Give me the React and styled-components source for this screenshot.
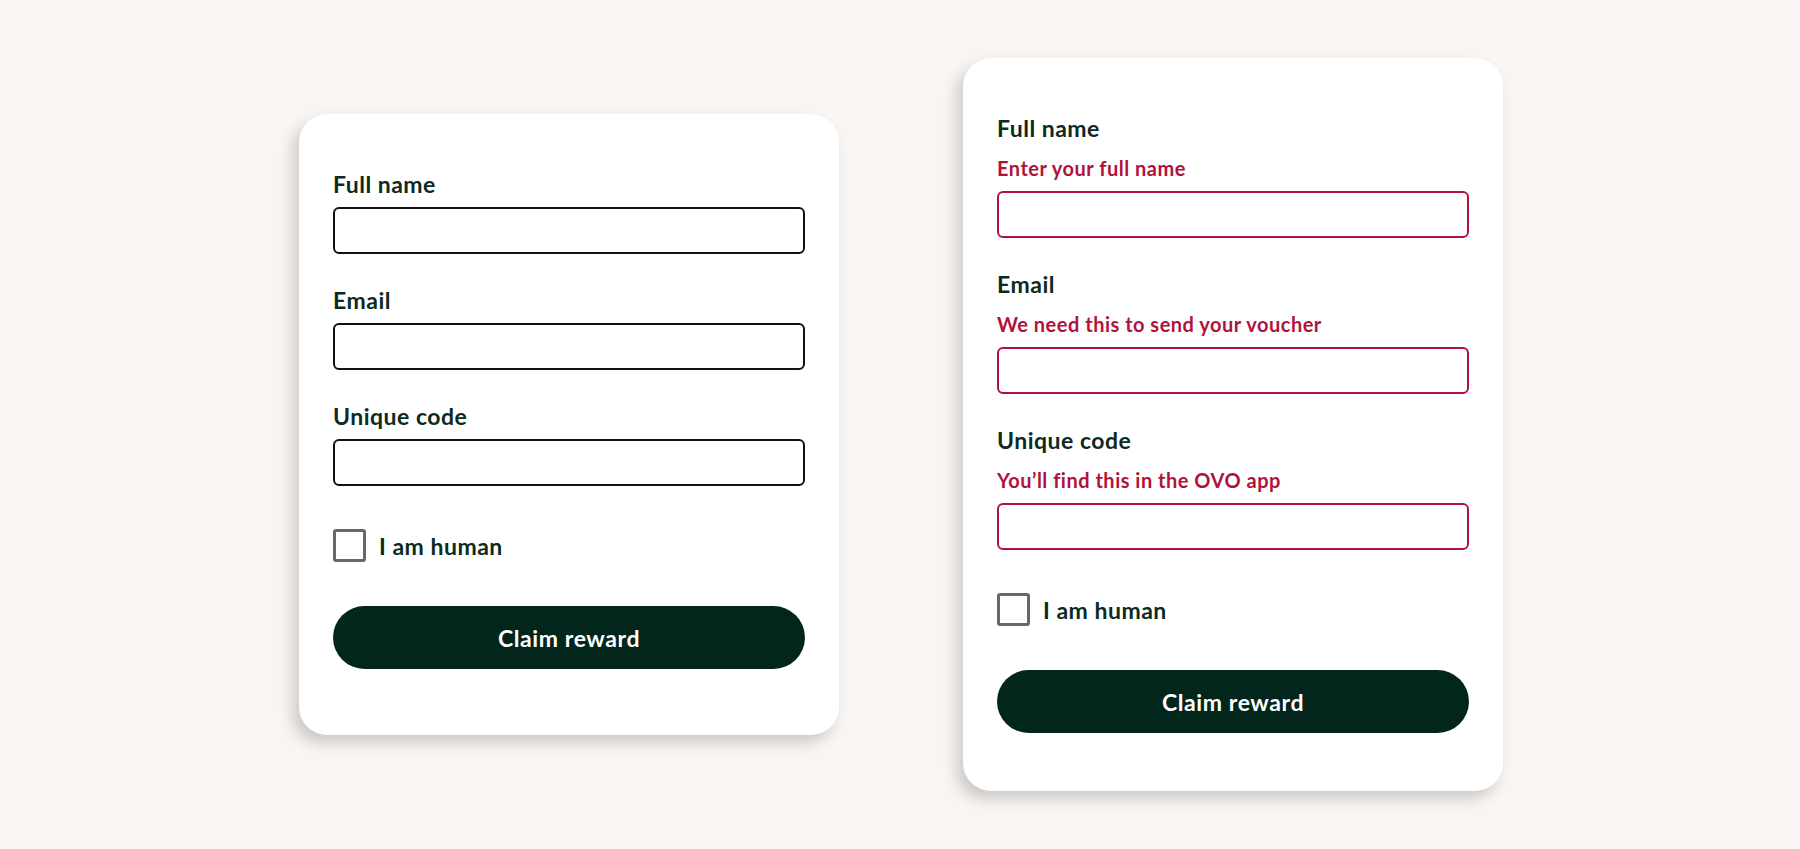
import React from "react";
import styled, { createGlobalStyle } from "styled-components";

const Global = createGlobalStyle`
  html, body { margin: 0; padding: 0; }
  body {
    background: #f8f5f2;
    font-family: "Lato", "Liberation Sans", sans-serif;
    -webkit-font-smoothing: antialiased;
  }
`;

const Page = styled.main`
  height: 849px;
  box-sizing: border-box;
  padding-left: 2px;
  display: flex;
  align-items: center;
  justify-content: center;
  gap: 124px;
`;

const Card = styled.form`
  width: 540px;
  box-sizing: border-box;
  background: #ffffff;
  border-radius: 28px;
  padding: 56px 34px ${(p) => p.$bottom}px;
  box-shadow: -6px 8px 14px rgba(60, 50, 45, 0.22);
  display: flex;
  flex-direction: column;
`;

const Field = styled.div`
  display: flex;
  flex-direction: column;
  margin-bottom: 32px;
`;

const Label = styled.label`
  font-size: 23px;
  font-weight: 700;
  letter-spacing: 0.5px;
  line-height: 28px;
  color: #0c2a1f;
  margin-bottom: 9px;
`;

const Hint = styled.span`
  font-size: 20px;
  font-weight: 700;
  letter-spacing: 0.5px;
  line-height: 28px;
  color: #b1123c;
  margin-top: 3px;
  margin-bottom: 9px;
`;

const Input = styled.input`
  box-sizing: border-box;
  height: 47px;
  width: 100%;
  border: 2.75px solid ${(p) => (p.$error ? "#b1123c" : "#111")};
  border-radius: 6px;
  background: #fff;
  outline: none;
  font: inherit;
`;

const CheckRow = styled.label`
  display: flex;
  align-items: center;
  gap: 13px;
  margin-top: 11px;
  margin-bottom: 44px;
  font-size: 23px;
  font-weight: 700;
  letter-spacing: 0.5px;
  color: #0c2a1f;
`;

const Box = styled.span`
  box-sizing: border-box;
  width: 33px;
  height: 33px;
  border: 3px solid #6a6866;
  border-radius: 3px;
  background: #fff;
`;

const Button = styled.button`
  height: 63px;
  width: 100%;
  border: none;
  border-radius: 32px;
  background: #03261c;
  color: #ffffff;
  font-family: inherit;
  font-size: 23px;
  font-weight: 700;
  letter-spacing: 0.6px;
  cursor: pointer;
`;

const fields = [
  { label: "Full name", hint: "Enter your full name" },
  { label: "Email", hint: "We need this to send your voucher" },
  { label: "Unique code", hint: "You\u2019ll find this in the OVO app" },
];

function Form({ error, bottom }) {
  return (
    <Card $bottom={bottom} onSubmit={(e) => e.preventDefault()}>
      {fields.map((f) => (
        <Field key={f.label}>
          <Label>{f.label}</Label>
          {error && <Hint>{f.hint}</Hint>}
          <Input $error={error} type="text" />
        </Field>
      ))}
      <CheckRow>
        <Box />
        I am human
      </CheckRow>
      <Button type="submit">Claim reward</Button>
    </Card>
  );
}

export default function App() {
  return (
    <>
      <Global />
      <Page>
        <Form bottom={66} />
        <Form error bottom={58} />
      </Page>
    </>
  );
}
